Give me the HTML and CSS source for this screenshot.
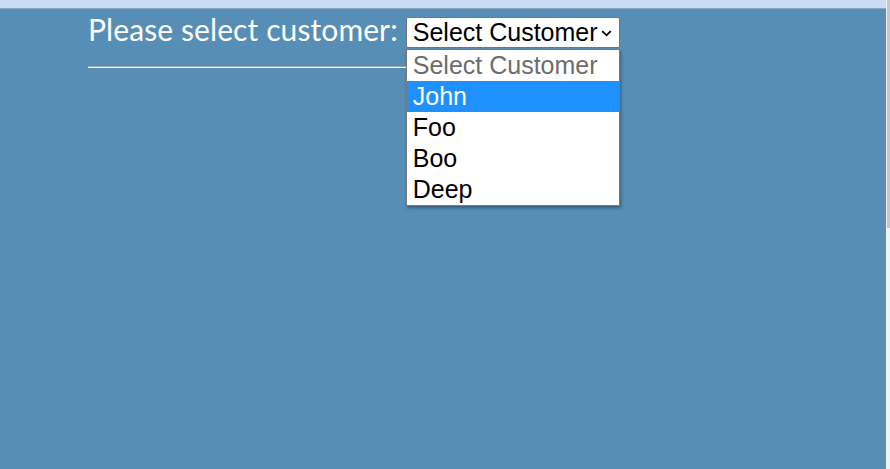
FILE: index.html
```html
<!DOCTYPE html>
<html>
<head>
<meta charset="utf-8">
<link rel="stylesheet" href="styles.css">
</head>
<body>
<div class="page">
  <div class="topbar"></div>
  <main class="main">
    <div class="form">
      <div class="row">
        <label class="label">Please select customer:</label>
        <div class="picker">
          <div class="select">
            <span class="select-text">Select Customer</span>
            <svg class="chev" width="11" height="7" viewBox="0 0 11 7"><path d="M1.2 1.2 L5.5 5.3 L9.8 1.2" fill="none" stroke="#000" stroke-width="1.8"/></svg>
          </div>
          <ul class="listbox">
            <li class="opt placeholder">Select Customer</li>
            <li class="opt active">John</li>
            <li class="opt">Foo</li>
            <li class="opt">Boo</li>
            <li class="opt">Deep</li>
          </ul>
        </div>
      </div>
      <div class="rule"></div>
    </div>
  </main>
  <div class="scrollbar"><div class="thumb"></div></div>
</div>
</body>
</html>
```

FILE: styles.css
```css
html, body {
  margin: 0;
  padding: 0;
  height: 100%;
  overflow: hidden;
}
.page {
  position: relative;
  height: 469px;
  display: flex;
  flex-direction: column;
  background: #568eb5;
}
.topbar {
  height: 8px;
  background: #cadcf4;
  border-bottom: 1px solid #8ea5bd;
  margin-right: 4px;
}
.main {
  flex: 1;
  padding: 2px 0 0 88px;
}
.form {
  display: inline-flex;
  flex-direction: column;
}
.row {
  display: flex;
  align-items: baseline;
  gap: 8px;
}
.label {
  font-family: Lato, "Open Sans", sans-serif;
  font-size: 30px;
  letter-spacing: 0.1px;
  color: #ffffff;
}
.picker {
  position: relative;
}
.select {
  width: 214px;
  height: 31px;
  box-sizing: border-box;
  background: #fff;
  border: 1px solid #767676;
  border-radius: 2px;
  display: flex;
  align-items: center;
  padding: 0 7px 0 6px;
  font-family: "Liberation Sans", Arial, sans-serif;
  font-size: 25px;
  color: #000;
}
.select-text {
  flex: none;
  line-height: 29px;
  white-space: nowrap;
}
.chev {
  display: block;
  flex: none;
  margin-left: auto;
  margin-top: 2px;
}
.listbox {
  position: absolute;
  left: 0;
  top: 32px;
  width: 214px;
  margin: 0;
  padding: 0;
  list-style: none;
  box-sizing: border-box;
  background: #fff;
  border: 1px solid #7a7a7a;
  box-shadow: 1px 2px 3px rgba(0,0,0,0.35);
  font-family: "Liberation Sans", Arial, sans-serif;
  font-size: 25px;
  z-index: 2;
}
.opt {
  height: 31px;
  line-height: 31px;
  padding-left: 6px;
  color: #000;
}
.opt.placeholder {
  color: #6d6d6d;
}
.opt.active {
  background: #1e90ff;
  color: #fff;
}
.rule {
  margin-top: 18px;
  height: 0;
  border-top: 1px solid #9aa6b0;
  border-bottom: 1px solid #eef4f8;
}
.scrollbar {
  position: absolute;
  top: 0;
  right: 0;
  width: 4px;
  height: 100%;
  background: #f1f1f1;
}
.thumb {
  height: 228px;
  margin-left: 1px;
  width: 3px;
  background: #c6c6c6;
}
```
